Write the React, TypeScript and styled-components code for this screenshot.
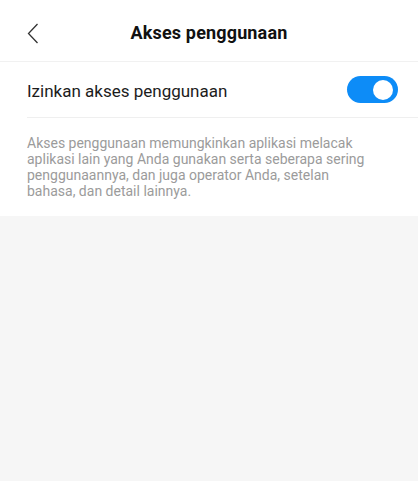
import React, { useState } from 'react';
import styled, { createGlobalStyle } from 'styled-components';

const GlobalStyle = createGlobalStyle`
  html, body {
    margin: 0;
    padding: 0;
    background: #f6f6f6;
    font-family: Roboto, 'Liberation Sans', sans-serif;
  }
`;

const Page = styled.div`
  width: 418px;
  min-height: 481px;
  background: #f6f6f6;
  display: flex;
  flex-direction: column;
`;

const Header = styled.header`
  height: 62px;
  box-sizing: border-box;
  padding-top: 4px;
  background: #fff;
  display: flex;
  align-items: center;
  justify-content: center;
  position: relative;
  border-bottom: 1px solid #f1f1f1;
`;

const BackButton = styled.button`
  position: absolute;
  left: 22px;
  top: 21px;
  width: 22px;
  height: 24px;
  padding: 0;
  border: none;
  background: none;
  display: flex;
  align-items: center;
  justify-content: center;
`;

const Title = styled.h1`
  margin: 0;
  font-size: 18px;
  font-weight: 700;
  color: #111;
  letter-spacing: 0.15px;
`;

const Section = styled.section`
  background: #fff;
  padding-left: 27px;
`;

const Row = styled.div`
  height: 55px;
  display: flex;
  align-items: center;
  justify-content: space-between;
  padding-right: 20px;
  border-bottom: 1px solid #efefef;
`;

const RowLabel = styled.span`
  font-size: 17px;
  color: #1c1c1c;
  padding-top: 2px;
`;

const Track = styled.button<{ $on: boolean }>`
  width: 51px;
  height: 27px;
  border-radius: 14px;
  border: none;
  padding: 0;
  background: ${(p) => (p.$on ? '#0d8cf7' : '#d9d9d9')};
  display: flex;
  align-items: center;
  justify-content: ${(p) => (p.$on ? 'flex-end' : 'flex-start')};
  cursor: pointer;
`;

const Knob = styled.span`
  width: 20px;
  height: 20px;
  border-radius: 50%;
  background: #fff;
  margin: 0 5px;
`;

const Description = styled.p`
  margin: 0;
  padding: 17px 42px 17px 0;
  font-size: 14px;
  line-height: 16px;
  color: #9b9b9b;
`;

export default function App() {
  const [on, setOn] = useState(true);
  return (
    <Page>
      <GlobalStyle />
      <Header>
        <BackButton aria-label="Kembali">
          <svg width="12" height="21" viewBox="0 0 12 21">
            <path d="M10.5 1 L1.5 10.5 L10.5 20" fill="none" stroke="#333" strokeWidth="1.3" />
          </svg>
        </BackButton>
        <Title>Akses penggunaan</Title>
      </Header>
      <Section>
        <Row>
          <RowLabel>Izinkan akses penggunaan</RowLabel>
          <Track $on={on} onClick={() => setOn(!on)}>
            <Knob />
          </Track>
        </Row>
        <Description>
          Akses penggunaan memungkinkan aplikasi melacak aplikasi lain yang Anda gunakan serta seberapa sering
          penggunaannya, dan juga operator Anda, setelan bahasa, dan detail lainnya.
        </Description>
      </Section>
    </Page>
  );
}
